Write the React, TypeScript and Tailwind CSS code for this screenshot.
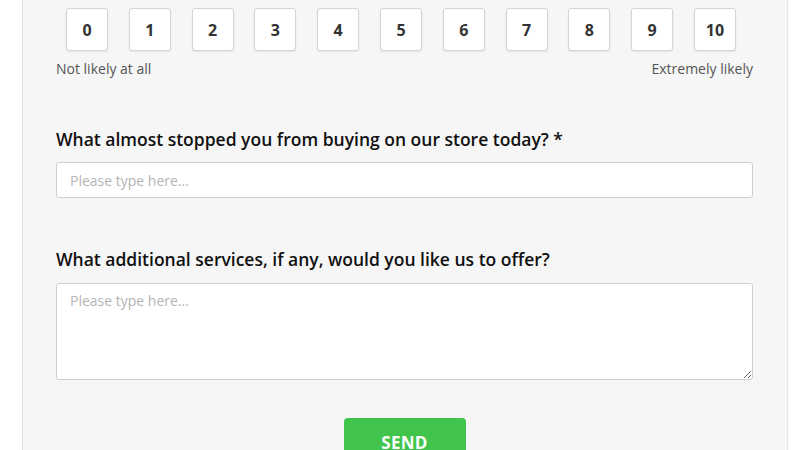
import React from "react";

export default function App() {
  const nums = [0, 1, 2, 3, 4, 5, 6, 7, 8, 9, 10];
  return (
    <div
      className="w-[800px] h-[450px] overflow-hidden bg-white"
      style={{ fontFamily: '"Open Sans", "Noto Sans", sans-serif' }}
    >
      <div className="ml-[22px] w-[766px] h-[450px] bg-[#f6f6f6] border-x border-[#e2e2e2] shadow-[0_0_2px_rgba(0,0,0,0.08)] pl-[33px] pr-[34px]">
        <div className="pt-[8px] pl-[10px] w-[680px] flex justify-between">
          {nums.map((n) => (
            <div
              key={n}
              className="w-[42px] h-[43px] bg-white border border-[#d4d4d4] rounded-[3px] shadow-[0_1px_2px_rgba(0,0,0,0.08)] flex items-center justify-center text-[16px] font-bold text-[#333]"
            >
              {n}
            </div>
          ))}
        </div>
        <div className="mt-[8px] flex justify-between text-[14px] font-medium text-[#555] leading-[20px]">
          <span>Not likely at all</span>
          <span>Extremely likely</span>
        </div>
        <div className="mt-[48px] text-[17.5px] font-semibold text-[#111] leading-[24px]">
          What almost stopped you from buying on our store today? *
        </div>
        <input
          className="mt-[11px] block w-full h-[36px] bg-white border border-[#cfcfcf] rounded-[3px] px-[13px] text-[14px] text-[#333] placeholder:text-[#b4b4b4] outline-none"
          placeholder="Please type here..."
        />
        <div className="mt-[49px] text-[17.5px] font-semibold text-[#111] leading-[24px]">
          What additional services, if any, would you like us to offer?
        </div>
        <textarea
          className="mt-[12px] block w-full h-[97px] bg-white border border-[#cfcfcf] rounded-[3px] px-[13px] py-[6px] text-[14px] text-[#333] placeholder:text-[#b4b4b4] outline-none resize-y"
          placeholder="Please type here..."
        />
        <div className="mt-[38px] flex justify-center">
          <button className="w-[122px] h-[44px] bg-[#40c44c] rounded-[4px] text-white font-bold text-[17px] tracking-[0.3px] leading-[20px] pt-[15px] flex justify-center items-start">
            SEND
          </button>
        </div>
      </div>
    </div>
  );
}
